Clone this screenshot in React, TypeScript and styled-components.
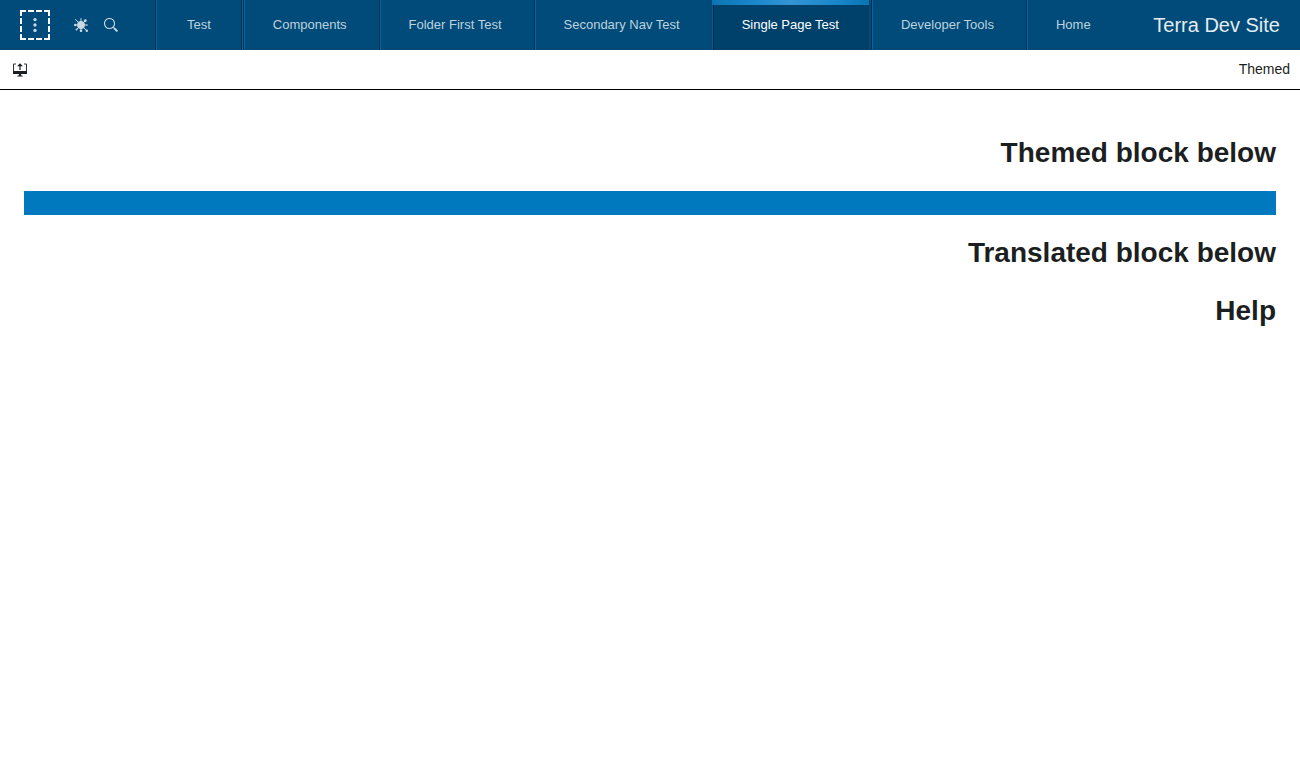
import React from 'react';
import styled, { createGlobalStyle, css } from 'styled-components';

const GlobalStyle = createGlobalStyle`
  *, *::before, *::after { box-sizing: border-box; }
  body {
    margin: 0;
    background: #fff;
    color: #1c1f21;
    font-family: "Liberation Sans", Arial, sans-serif;
    font-size: 14px;
  }
`;

const Header = styled.header`
  display: flex;
  align-items: stretch;
  height: 50px;
  padding: 0 20px;
  background: linear-gradient(#004b79 48px, #004773 50px);
`;

const Tools = styled.div`
  display: flex;
  align-items: center;
  width: 137px;
  flex-shrink: 0;
`;

const IconButton = styled.button`
  display: flex;
  align-items: center;
  justify-content: center;
  width: 30px;
  height: 30px;
  padding: 0;
  border: 0;
  background: none;
  color: #cbd9e3;
`;

const MenuButton = styled(IconButton)`
  margin-right: 16px;
  outline: 2px dashed #fff;
  outline-offset: -2px;
`;

const Tabs = styled.nav`
  display: flex;
  gap: 2px;
`;

const divider = css`
  content: "";
  position: absolute;
  top: 0;
  bottom: 0;
  width: 2px;
  background: linear-gradient(90deg, #003150 50%, #0067a3 50%);
`;

const Tab = styled.a<{ $active?: boolean }>`
  position: relative;
  display: flex;
  align-items: center;
  padding: 0 30px;
  color: #bfd2dd;
  font-size: 13px;
  line-height: 16px;
  white-space: nowrap;
  text-decoration: none;

  &::before {
    ${divider}
    left: 0;
  }

  &:first-child::before {
    left: -2px;
  }

  &:first-child::after {
    ${divider}
    left: 100%;
  }

  ${({ $active }) => $active && css`
    background: linear-gradient(#00416c 48px, #003e67 50px);
    color: #fff;

    &::before {
      background: linear-gradient(90deg, #005a8f 50%, #002a45 50%);
    }

    &::after {
      content: "";
      position: absolute;
      inset: 0 0 auto 0;
      height: 5px;
      background: linear-gradient(90deg, #0c74b2, #1886ca 25%, #3593d3 50%, #1886ca 80%, #0c74b2);
    }
  `}
`;

const SiteTitle = styled.div`
  margin-left: auto;
  color: #e5edf1;
  font-size: 20px;
  line-height: 50px;
  white-space: nowrap;
`;

const PageBar = styled.div`
  display: flex;
  align-items: center;
  justify-content: space-between;
  height: 40px;
  padding: 0 10px 0 5px;
  border-bottom: 1px solid #000;
`;

const PageName = styled.span`
  padding-bottom: 2px;
  line-height: 20px;
`;

const DarkIconButton = styled(IconButton)`
  color: #1c1f21;
`;

const Content = styled.main`
  padding: 46px 24px 24px;
  text-align: right;
`;

const Heading = styled.h1`
  margin: 0;
  font-size: 28px;
  line-height: 34px;
`;

const ThemedBlock = styled.div`
  height: 24px;
  margin: 21px 0;
  background: #0079be;
`;

const Translated = styled(Heading)`
  margin-top: 24px;
`;

const tabs = [
  'Test', 'Components', 'Folder First Test', 'Secondary Nav Test',
  'Single Page Test', 'Developer Tools', 'Home',
];

const MenuIcon = () => (
  <svg width="4" height="16" viewBox="0 0 4 16" fill="currentColor" aria-hidden="true">
    <circle cx="2" cy="2.6" r="1.65" />
    <circle cx="2" cy="8" r="1.65" />
    <circle cx="2" cy="13.4" r="1.65" />
  </svg>
);

const BugIcon = () => (
  <svg width="14" height="14" viewBox="0 0 14 14" fill="currentColor" stroke="currentColor" aria-hidden="true">
    <circle cx="7" cy="7" r="3.9" stroke="none" />
    <path d="M7 4V.2M7 10v3M4 7H1M10 7h3M4.8 4.8 1.2 1.2M9.2 4.8l2-2M4.8 9.2l-2 2M9.2 9.2l3.6 3.6" strokeWidth="1" />
    <g stroke="none">
      <circle cx="1.2" cy="7" r="1.2" />
      <circle cx="7" cy="12.8" r="1.3" />
      <circle cx="11.3" cy="2.7" r="1.4" />
      <circle cx="2.6" cy="11.4" r="1" />
      <circle cx="12.8" cy="12.8" r="1.2" />
      <circle cx="13" cy="7" r=".7" />
    </g>
  </svg>
);

const SearchIcon = () => (
  <svg width="14" height="14" viewBox="0 0 14 14" fill="none" stroke="currentColor" aria-hidden="true">
    <circle cx="5.5" cy="5.5" r="5" strokeWidth="1.1" />
    <path d="m9.2 9.2 1 1" />
    <path d="m10 10 3.4 3.4" strokeWidth="1.9" />
  </svg>
);

const DisplayIcon = () => (
  <svg width="14" height="14" viewBox="0 0 14 14" aria-hidden="true">
    <path d="M3 1H.5v9h13V1H11" fill="none" stroke="currentColor" strokeWidth=".9" />
    <path d="M0 8h14v3H0zM6 11h2l.4 1.6 1.6.4v.6H4V13l1.6-.4zM7 .2 10 3.2H7.6V7H6.4V3.2H4z" fill="currentColor" />
  </svg>
);

export default function App() {
  return (
    <>
      <GlobalStyle />
      <Header>
        <Tools>
          <MenuButton aria-label="Menu"><MenuIcon /></MenuButton>
          <IconButton aria-label="Settings"><BugIcon /></IconButton>
          <IconButton aria-label="Search"><SearchIcon /></IconButton>
        </Tools>
        <Tabs>
          {tabs.map((name) => (
            <Tab
              key={name}
              href="#"
              $active={name === 'Single Page Test'}
              aria-current={name === 'Single Page Test' ? 'page' : undefined}
            >
              {name}
            </Tab>
          ))}
        </Tabs>
        <SiteTitle>Terra Dev Site</SiteTitle>
      </Header>
      <PageBar>
        <DarkIconButton aria-label="Open menu"><DisplayIcon /></DarkIconButton>
        <PageName>Themed</PageName>
      </PageBar>
      <Content>
        <Heading>Themed block below</Heading>
        <ThemedBlock />
        <Heading>Translated block below</Heading>
        <Translated>Help</Translated>
      </Content>
    </>
  );
}
